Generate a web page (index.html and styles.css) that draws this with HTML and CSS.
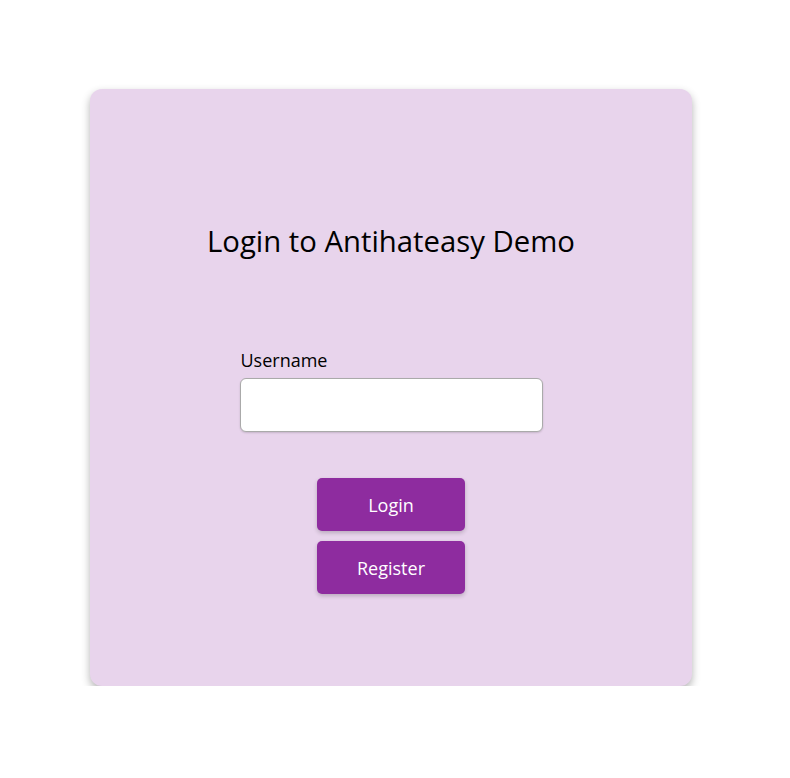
FILE: index.html
```html
<!DOCTYPE html>
<html>
<head>
<meta charset="utf-8"/>
<title>Antihateasy Demo</title>
<link rel="stylesheet" href="styles.css">
</head>
<body>
<div class="card">
  <h1 class="title">Login to Antihateasy Demo</h1>
  <form class="login-form">
    <label class="field">
      <span class="field-label">Username</span>
      <input class="field-input" type="text">
    </label>
    <div class="actions">
      <button class="btn" type="button">Login</button>
      <button class="btn" type="button">Register</button>
    </div>
  </form>
</div>
</body>
</html>
```

FILE: styles.css
```css
body {
   margin: 0;
   background-color: white;
   font-family: 'Open Sans', sans-serif;
}

.card {
   box-sizing: border-box;
   width: 602px;
   height: 597px;
   margin: 89px 0 0 90px;
   background-color: #e8d4ec;
   border-radius: 12px;
   box-shadow: 0 4px 8px rgba(0, 0, 0, 0.3);
   display: flex;
   flex-direction: column;
   align-items: center;
   padding-top: 133px;
}

.title {
   margin: 0;
   font-size: 29.3px;
   font-weight: 400;
   line-height: 38px;
   color: #000;
}

.login-form {
   display: flex;
   flex-direction: column;
   align-items: center;
   margin-top: 88px;
}

.field {
   display: flex;
   flex-direction: column;
}

.field-label {
   font-size: 18px;
   line-height: 24px;
   padding-left: 1px;
   margin-bottom: 6px;
   color: #000;
}

.field-input {
   box-sizing: border-box;
   width: 303px;
   height: 54px;
   border: 1px solid #aaa;
   border-radius: 6px;
   background: white;
   box-shadow: 0 1px 2px rgba(0, 0, 0, 0.15);
   font: inherit;
   font-size: 18px;
   padding: 0 10px;
}

.actions {
   display: flex;
   flex-direction: column;
   gap: 10px;
   margin-top: 46px;
}

.btn {
   width: 148px;
   height: 53px;
   border: none;
   border-radius: 5px;
   background-color: #8e2c9f;
   color: #fff;
   font-family: 'Open Sans', sans-serif;
   font-size: 18px;
   box-shadow: 0 2px 4px rgba(0, 0, 0, 0.2);
   cursor: pointer;
}
```
